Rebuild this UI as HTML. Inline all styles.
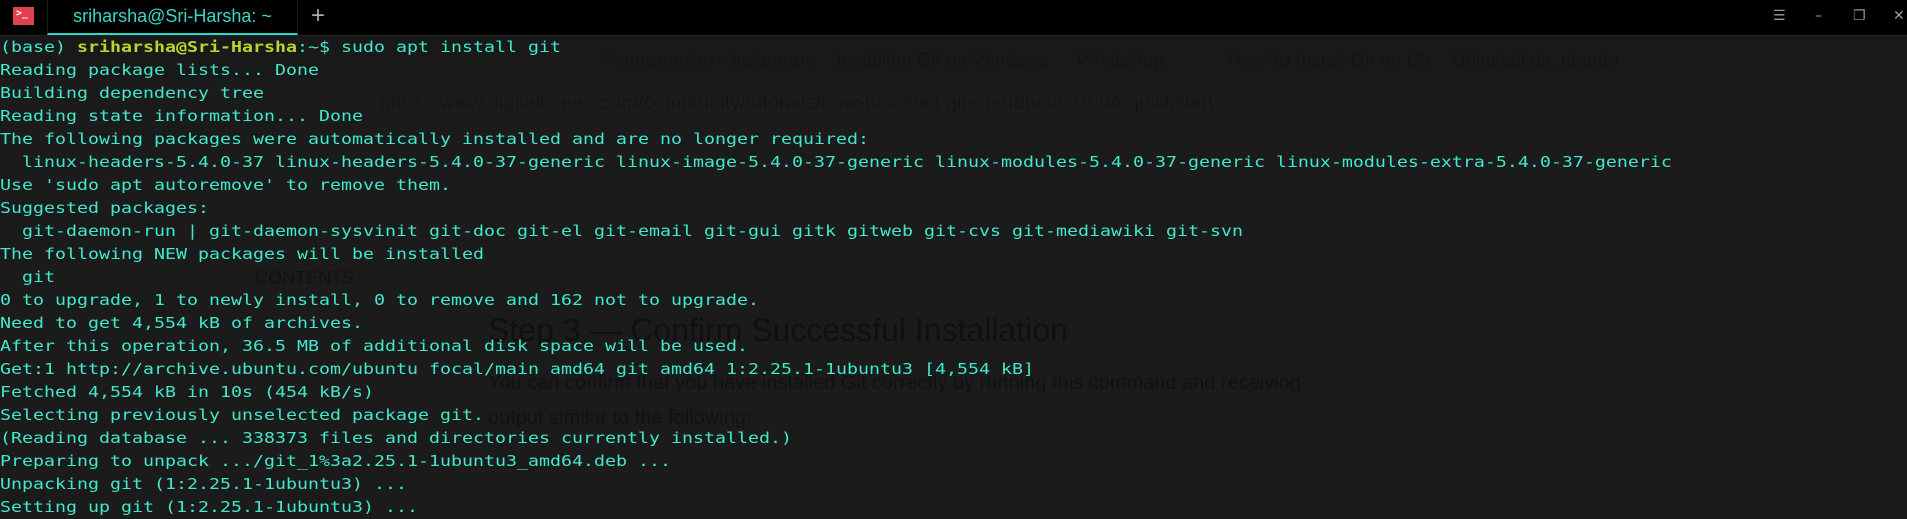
<!DOCTYPE html>
<html><head><meta charset="utf-8"><style>
html,body{margin:0;padding:0}
body{width:1907px;height:519px;overflow:hidden;background:#1b1b1b;position:relative;font-family:"Liberation Sans",sans-serif}
.tb{position:absolute;left:0;top:0;width:1907px;height:35px;background:#000;border-bottom:1px solid #222}
.icon{position:absolute;left:13px;top:7px;width:21px;height:18px;background:#e0414b;color:#fff;font:bold 10px "DejaVu Sans Mono",monospace;line-height:14px;padding-left:3px;box-sizing:border-box}
.tab{position:absolute;left:47px;top:0;width:249px;height:33px;border-right:1px solid #1a1a1a;border-left:1px solid #1a1a1a;border-bottom:2px solid #2fd8c4;color:#3ad6c6;font-size:18px;line-height:32px;text-align:center;white-space:nowrap}
.plus{position:absolute;left:311px;top:2px;color:#aaa;font-size:24px;font-weight:300}
.ctl{position:absolute;top:8px;color:#999;font-size:14px;font-family:"DejaVu Sans",sans-serif}
.bg{position:absolute;color:#121212;white-space:nowrap}
.term{position:absolute;left:0;top:36px;transform:scaleX(1.218);transform-origin:0 0;font-family:"DejaVu Sans Mono",monospace;font-size:15px;line-height:23px;color:#40e8cc;white-space:pre}
.y{color:#b5d82a;font-weight:bold}
</style></head><body>
<div class="bg" style="left:0;top:36px;width:1907px;height:42px;background:#191919"></div>
<div class="bg" style="left:600px;top:50px;font-size:19px;color:#151515">Programming - Instagram &nbsp;&nbsp; Installing Git on Windows &nbsp;&nbsp;&nbsp; WhatsApp &nbsp;&nbsp;&nbsp;&nbsp;&nbsp;&nbsp;&nbsp;&nbsp;&nbsp;&nbsp; How To Install Git on Ub &nbsp;&nbsp; Uninstall git, ubuntu</div>
<div class="bg" style="left:380px;top:92px;font-size:20px;color:#161616">https://www.digitalocean.com/community/tutorials/how-to-install-git-on-ubuntu-18-04-quickstart</div>
<div class="bg" style="left:255px;top:268px;font-size:18px;color:#121212">CONTENTS</div>
<div class="bg" style="left:488px;top:312px;font-size:32px;color:#101010">Step 3 — Confirm Successful Installation</div>
<div class="bg" style="left:488px;top:372px;font-size:20px;color:#121212">You can confirm that you have installed Git correctly by running this command and receiving</div>
<div class="bg" style="left:488px;top:407px;font-size:20px;color:#121212">output similar to the following:</div>
<div class="tb"></div>
<div class="icon">&gt;_</div>
<div class="tab">sriharsha@Sri-Harsha: ~</div>
<div class="plus">+</div>
<div class="ctl" style="left:1773px">☰</div>
<div class="ctl" style="left:1815px">–</div>
<div class="ctl" style="left:1853px">❐</div>
<div class="ctl" style="left:1893px">✕</div>
<div class="term">(base) <span class="y">sriharsha@Sri-Harsha</span>:~$ sudo apt install git
Reading package lists... Done
Building dependency tree
Reading state information... Done
The following packages were automatically installed and are no longer required:
  linux-headers-5.4.0-37 linux-headers-5.4.0-37-generic linux-image-5.4.0-37-generic linux-modules-5.4.0-37-generic linux-modules-extra-5.4.0-37-generic
Use 'sudo apt autoremove' to remove them.
Suggested packages:
  git-daemon-run | git-daemon-sysvinit git-doc git-el git-email git-gui gitk gitweb git-cvs git-mediawiki git-svn
The following NEW packages will be installed
  git
0 to upgrade, 1 to newly install, 0 to remove and 162 not to upgrade.
Need to get 4,554 kB of archives.
After this operation, 36.5 MB of additional disk space will be used.
Get:1 http://archive.ubuntu.com/ubuntu focal/main amd64 git amd64 1:2.25.1-1ubuntu3 [4,554 kB]
Fetched 4,554 kB in 10s (454 kB/s)
Selecting previously unselected package git.
(Reading database ... 338373 files and directories currently installed.)
Preparing to unpack .../git_1%3a2.25.1-1ubuntu3_amd64.deb ...
Unpacking git (1:2.25.1-1ubuntu3) ...
Setting up git (1:2.25.1-1ubuntu3) ...</div>
</body></html>
